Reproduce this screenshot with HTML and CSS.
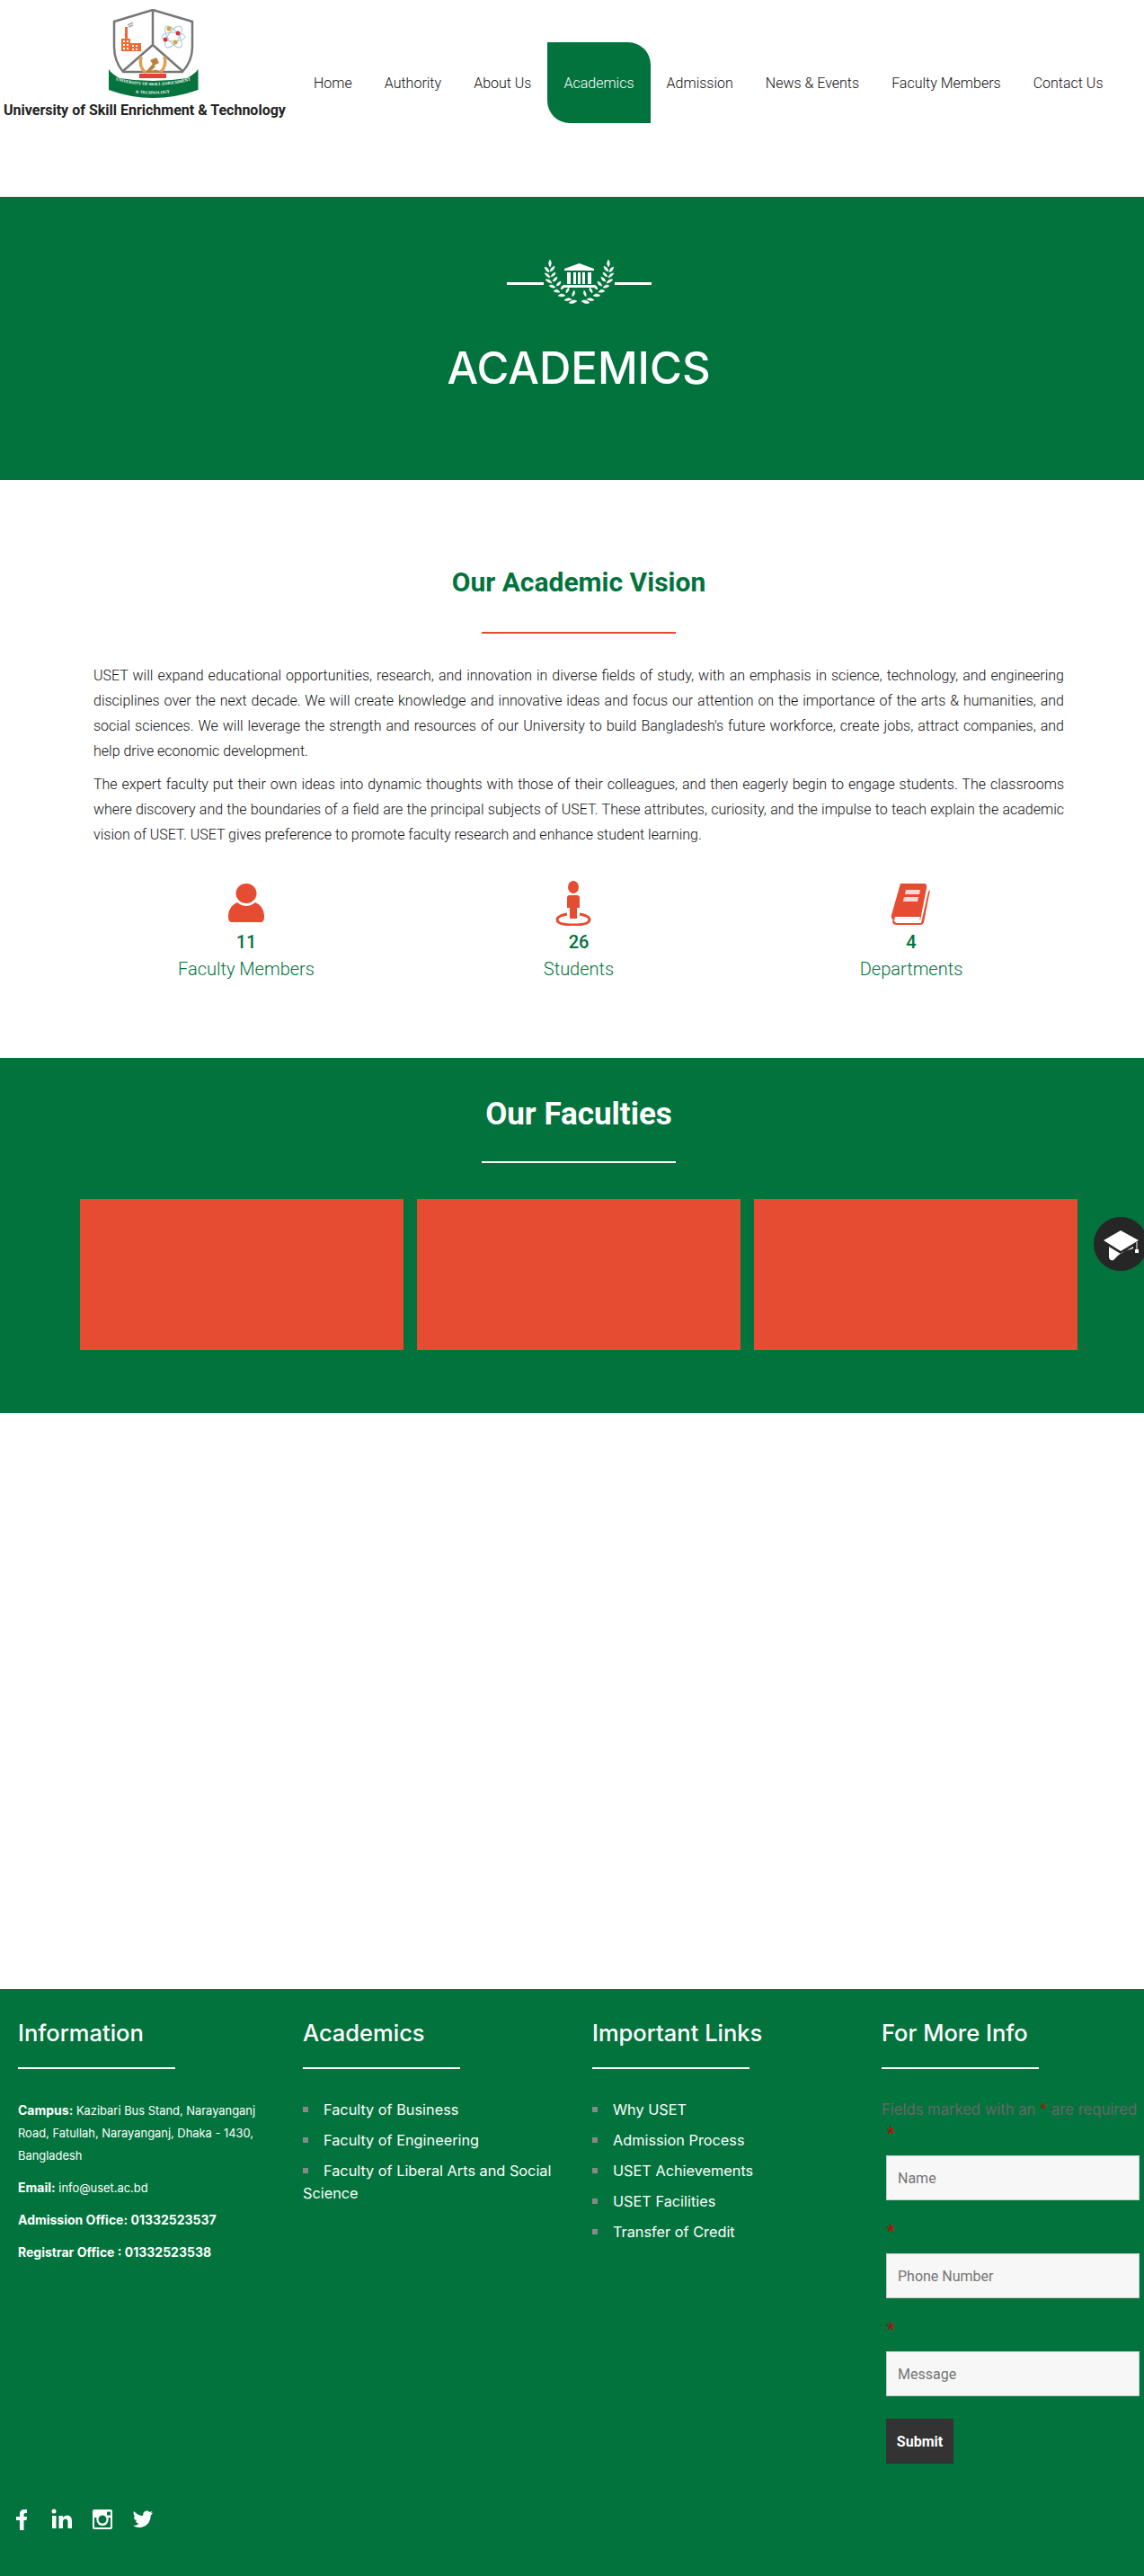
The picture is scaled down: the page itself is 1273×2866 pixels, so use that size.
FILE: index.html
```html
<!DOCTYPE html>
<html lang="en">
<head>
  <meta charset="UTF-8">
  <meta name="viewport" content="width=device-width, initial-scale=1.0">
  <title>Academics - University of Skill Enrichment &amp; Technology</title>
  <link rel="stylesheet" href="styles.css">
</head>
<body>
<div class="page">

  <!-- header -->
  <header class="site-header">
    <a class="brand" href="#">
      <svg class="brand-logo" viewBox="0 0 101 100" width="101" height="100">
        <path d="M50 1 L94 14 V42 Q94 58 83 70 H17 Q7 58 7 42 V14 Z" fill="#fff" stroke="#777" stroke-width="2.500"/>
        <path d="M50 1 V40 M50 40 L17 69 M50 40 L83 69" fill="none" stroke="#777" stroke-width="2.500"/>
        <!-- factory -->
        <path d="M15 47 V33 H19 V20 H22 V33 H25 V38 H37 V47 Z" fill="#ee6a33"/>
        <path d="M17 35h2v2h-2z M21 35h2v2h-2z M17 39h2v2h-2z M21 39h2v2h-2z M17 43h2v2h-2z M21 43h2v2h-2z M27 40h2v2h-2z M31 40h2v2h-2z M27 44h2v2h-2z M31 44h2v2h-2z" fill="#fff"/>
        <path d="M22 18 L28 15 M23 20 L28 18" stroke="#aaa" stroke-width="1.500"/>
        <!-- atom -->
        <g fill="none" stroke="#a9c9d8" stroke-width="1">
          <ellipse cx="73" cy="31" rx="6" ry="14" transform="rotate(-35 73 31)"/>
          <ellipse cx="73" cy="31" rx="6" ry="14" transform="rotate(35 73 31)"/>
          <ellipse cx="73" cy="31" rx="13" ry="5"/>
        </g>
        <circle cx="68" cy="22" r="2.500" fill="#d9a441"/>
        <circle cx="78" cy="27" r="2.500" fill="#d8343f"/>
        <circle cx="64" cy="34" r="2.500" fill="#d8343f"/>
        <circle cx="75" cy="37" r="2.500" fill="#d9a441"/>
        <!-- gavel and laurel -->
        <path d="M37 53 Q34 64 42 71 M63 53 Q66 64 58 71" fill="none" stroke="#e0a050" stroke-width="3.500"/>
        <path d="M42 70 L50 61 L53 64 L46 71 Z M47 57 L54 54 L57 60 L51 63 Z M46 71 Q53 64 60 71 Z" fill="#b9813f"/>
        <path d="M35 72 H65 V77 H35 Z" fill="#e4433a"/>
        <!-- banner -->
        <path d="M1 67 Q4 72 13 77 Q50 83 88 77 Q97 72 100.500 67 V90 Q50 108 1 90 Z" fill="#04733d"/>
        <path id="ribbonTop" d="M4 78 Q50 92 97 78" fill="none"/>
        <path id="ribbonLow" d="M24 92 Q50 97 76 92" fill="none"/>
        <text class="brand-ribbon"><textPath href="#ribbonTop" startOffset="50%" text-anchor="middle">UNIVERSITY OF SKILL ENRICHMENT</textPath></text>
        <text class="brand-ribbon"><textPath href="#ribbonLow" startOffset="50%" text-anchor="middle">&amp; TECHNOLOGY</textPath></text>
      </svg>
      <span class="brand-name">University of Skill Enrichment &amp; Technology</span>
    </a>
    <nav class="main-nav">
      <a href="#">Home</a>
      <a href="#">Authority</a>
      <a href="#">About Us</a>
      <a href="#" class="active">Academics</a>
      <a href="#">Admission</a>
      <a href="#">News &amp; Events</a>
      <a href="#">Faculty Members</a>
      <a href="#">Contact Us</a>
    </nav>
  </header>

  <!-- page banner -->
  <section class="hero">
    <svg class="hero-emblem" viewBox="0 0 161 52" width="161" height="52">
      <defs>
        <g id="laurel" fill="#fff" stroke="#fff" stroke-width="0.500">
          <path d="M48 1 Q51 5 48 9 Q45 5 48 1Z"/>
          <path d="M47 15 Q43 14 42 9 Q47 10 47 15Z"/>
          <path d="M48 14 Q48 10 53 8 Q53 13 48 14Z"/>
          <path d="M48 21 Q44 20 42 16 Q47 16 48 21Z"/>
          <path d="M49 20 Q50 16 54 15 Q54 19 49 20Z"/>
          <path d="M50 27 Q46 27 43 23 Q48 22 50 27Z"/>
          <path d="M51 25 Q52 21 56 20 Q56 25 51 25Z"/>
          <path d="M54 32 Q50 33 47 30 Q51 27 54 32Z"/>
          <path d="M55 30 Q56 26 60 25 Q60 30 55 30Z"/>
          <path d="M59 37 Q55 38 52 36 Q56 32 59 37Z"/>
          <path d="M60 34 Q60 30 64 29 Q65 33 60 34Z"/>
          <path d="M65 41 Q61 43 57 41 Q61 37 65 41Z"/>
          <path d="M66 38 Q65 34 69 32 Q70 36 66 38Z"/>
          <path d="M72 45 Q68 48 64 46 Q68 42 72 45Z"/>
          <path d="M73 42 Q72 38 75 35 Q77 39 73 42Z"/>
          <path d="M78 47 Q74 51 69 49 Q73 44 78 47Z"/>
        </g>
      </defs>
      <rect x="0" y="26" width="41" height="3" fill="#fff"/>
      <rect x="120" y="26" width="41" height="3" fill="#fff"/>
      <use href="#laurel"/>
      <use href="#laurel" transform="translate(161 0) scale(-1 1)"/>
      <path d="M80.500 5 L97 11 V13 H64 V11 Z" fill="#fff"/>
      <path d="M67 15h4v13h-4z M74 15h3v13h-3z M79 15h3v13h-3z M84 15h3v13h-3z M90 15h4v13h-4z" fill="#fff"/>
      <rect x="64" y="29" width="33" height="3" fill="#fff"/>
    </svg>
    <h1>ACADEMICS</h1>
  </section>

  <!-- vision -->
  <section class="vision">
    <h2 class="section-title">Our Academic Vision</h2>
    <div class="title-rule"></div>
    <p>USET will expand educational opportunities, research, and innovation in diverse fields of study, with an emphasis in science, technology, and engineering disciplines over the next decade. We will create knowledge and innovative ideas and focus our attention on the importance of the arts &amp; humanities, and social sciences. We will leverage the strength and resources of our University to build Bangladesh's future workforce, create jobs, attract companies, and help drive economic development.</p>
    <p>The expert faculty put their own ideas into dynamic thoughts with those of their colleagues, and then eagerly begin to engage students. The classrooms where discovery and the boundaries of a field are the principal subjects of USET. These attributes, curiosity, and the impulse to teach explain the academic vision of USET. USET gives preference to promote faculty research and enhance student learning.</p>

    <div class="stats">
      <div class="stat">
        <svg viewBox="0 0 40 50" width="40" height="50">
          <ellipse cx="20" cy="14" rx="11.500" ry="11" fill="#e64c32"/>
          <path d="M10 24 Q20 32 30 24 Q40 28 40 40 Q40 46 36 46 H4 Q0 46 0 40 Q0 28 10 24Z" fill="#e64c32"/>
        </svg>
        <div class="stat-num">11</div>
        <div class="stat-label">Faculty Members</div>
      </div>
      <div class="stat">
        <svg class="stat-student" viewBox="0 0 40 50" width="40" height="50">
          <ellipse cx="20" cy="7" rx="6" ry="7" fill="#e64c32"/>
          <path d="M13 19 Q13 16 16 16 H24 Q27 16 27 19 V30 H24 V42 H16 V30 H13Z" fill="#e64c32"/>
          <path d="M13 37 Q2 39 2 43 Q2 49 20 49 Q38 49 38 43 Q38 39 27 37" fill="none" stroke="#e64c32" stroke-width="3"/>
        </svg>
        <div class="stat-num">26</div>
        <div class="stat-label">Students</div>
      </div>
      <div class="stat">
        <svg viewBox="0 0 47 50" width="47" height="50">
          <path d="M11 3 H37 Q41 3 40 8 L33 44 H6 Q0 44 1 38 Z" fill="#e64c32"/>
          <path d="M5 40 H33 L32 46 H7 Q3 46 5 40Z" fill="#fff"/>
          <path d="M3 42 Q4 47 8 47 H34 L42 12 L44 10 L37 46 Q36 49 33 49 H7 Q0 49 3 42Z" fill="#e64c32"/>
          <path d="M17 10 H33 L32 15 H16Z M15 18 H31 L30 23 H14Z" fill="#fbd9d2"/>
        </svg>
        <div class="stat-num">4</div>
        <div class="stat-label">Departments</div>
      </div>
    </div>
  </section>

  <!-- faculties -->
  <section class="faculties">
    <h2 class="section-title">Our Faculties</h2>
    <div class="title-rule"></div>
    <div class="faculty-row">
      <div class="faculty-card"></div>
      <div class="faculty-card"></div>
      <div class="faculty-card"></div>
    </div>
    <a class="float-btn" href="#">
      <svg viewBox="0 0 60 60" width="60" height="60">
        <path d="M11 26 L30 15 L50 26 L30 38Z" fill="#fff"/>
        <path d="M17 33 L30 41 L44 33 V35 Q30 38 22 48 Q18 49 17 45Z" fill="#fff"/>
        <path d="M48 28 V36" stroke="#fff" stroke-width="1"/>
        <rect x="46" y="36" width="4" height="4" fill="#fff"/>
      </svg>
    </a>
  </section>

  <div class="blank-area"></div>

  <!-- footer -->
  <footer class="site-footer">
    <div class="footer-cols">
      <div class="footer-col first">
        <h3>Information</h3>
        <div class="foot-rule"></div>
        <p class="info"><b>Campus:</b> Kazibari Bus Stand, Narayanganj<br>Road, Fatullah, Narayanganj, Dhaka - 1430,<br>Bangladesh</p>
        <p class="info"><b>Email:</b> info@uset.ac.bd</p>
        <p class="info"><b>Admission Office: 01332523537</b></p>
        <p class="info"><b>Registrar Office : 01332523538</b></p>
      </div>
      <div class="footer-col">
        <h3>Academics</h3>
        <div class="foot-rule"></div>
        <ul class="foot-links">
          <li>Faculty of Business</li>
          <li>Faculty of Engineering</li>
          <li>Faculty of Liberal Arts and Social Science</li>
        </ul>
      </div>
      <div class="footer-col">
        <h3>Important Links</h3>
        <div class="foot-rule"></div>
        <ul class="foot-links">
          <li>Why USET</li>
          <li>Admission Process</li>
          <li>USET Achievements</li>
          <li>USET Facilities</li>
          <li>Transfer of Credit</li>
        </ul>
      </div>
      <div class="footer-col">
        <h3>For More Info</h3>
        <div class="foot-rule"></div>
        <div class="req-note">Fields marked with an <span>*</span> are required</div>
        <form class="contact-form">
          <label class="star" for="fName">*</label>
          <input type="text" id="fName" placeholder="Name">
          <label class="star" for="fPhone">*</label>
          <input type="text" id="fPhone" placeholder="Phone Number">
          <label class="star" for="fMsg">*</label>
          <input type="text" id="fMsg" placeholder="Message">
          <button type="button">Submit</button>
        </form>
      </div>
    </div>
    <div class="social">
      <a href="#"><svg viewBox="0 0 24 24" width="24" height="24"><path d="M10 24 V13 H6 V9 H10 V6 Q10 1 15 1 H18 V5 H16 Q14.500 5 14.500 7 V9 H18 L17.500 13 H14.500 V24Z" fill="#fff"/></svg></a>
      <a href="#"><svg viewBox="0 0 24 24" width="24" height="24"><circle cx="3" cy="3" r="2.500" fill="#fff"/><path d="M1 8h4.500v14H1z M8.500 8H13v2Q14.500 7.500 18 7.500 Q23 7.500 23 14 V22 H18.500 V15 Q18.500 11.500 16 11.500 Q13 11.500 13 15 V22 H8.500Z" fill="#fff"/></svg></a>
      <a href="#"><svg viewBox="0 0 24 24" width="24" height="24"><path fill-rule="evenodd" d="M3 1H21Q23 1 23 3V21Q23 23 21 23H3Q1 23 1 21V3Q1 1 3 1Z M3 10V20.500Q3 21 3.500 21H20.500Q21 21 21 20.500V10H18.500Q19.500 15 16 18Q12 20 8 18Q4.500 15 5.500 10Z M12 7.500A4.500 4.500 0 1 0 12 16.500A4.500 4.500 0 1 0 12 7.500Z M17 3.500V7.500H21V3.500Z" fill="#fff"/></svg></a>
      <a href="#"><svg viewBox="0 0 24 24" width="24" height="24"><path d="M23 4.500Q21.800 5 20.500 5.200Q22 4.300 22.500 2.800Q21 3.600 19.600 3.900Q18 2.300 15.900 2.500Q12 3 12 8Q7 8 2 3Q0.500 6.500 3.500 9.500Q2.500 9.400 1.800 9Q2 12.500 5.500 13.500Q4.500 13.800 3.700 13.600Q4.500 16.500 7.800 16.800Q4.500 19.200 1 19Q6 22 11.500 20.500Q20.500 18 20.800 7.600Q22.200 6.500 23 4.500Z" fill="#fff"/></svg></a>
    </div>
  </footer>

</div>
</body>
</html>
```
FILE: styles.css
```css
/* base */
html, body {
  margin: 0;
  padding: 0;
  overflow-x: hidden;
}
body {
  font-family: "Roboto", "Liberation Sans", sans-serif;
  background-color: #fff;
  color: #111;
}
/* the page is a little wider than the window, so the right side is cut */
.page {
  width: 1288px;
  position: relative;
}
a {
  text-decoration: none;
  color: inherit;
}

/* header */
.site-header {
  display: flex;
  height: 219px;
  background-color: #fff;
}
.brand {
  width: 331px;
  flex: none;
  display: flex;
  flex-direction: column;
  padding: 10px 0 0 4px;
  box-sizing: border-box;
}
.brand-logo {
  margin-left: 116px;
  display: block;
}
.brand-ribbon {
  font-family: "Liberation Serif", serif;
  font-size: 4.6px;
  font-weight: bold;
  fill: #fff;
}
.brand-name {
  font-size: 16px;
  font-weight: 700;
  line-height: 24px;
  margin-top: 1px;
  color: #222;
  white-space: nowrap;
}
.main-nav {
  display: flex;
  align-items: stretch;
  height: 90px;
  margin-top: 47px;
}
.main-nav a {
  display: flex;
  align-items: center;
  padding: 0 18px;
  font-size: 16px;
  font-weight: 300;
  color: #111;
  white-space: nowrap;
}
.main-nav a.active {
  background-color: #03733d;
  color: #fff;
  border-radius: 0 25px 0 25px;
}

/* banner */
.hero {
  height: 315px;
  box-sizing: border-box;
  padding-top: 69px;
  background-color: #03733d;
  text-align: center;
  color: #fff;
}
.hero-emblem {
  display: block;
  margin: 0 auto;
}
.hero h1 {
  margin: 40px 0 0;
  font-family: "Inter", sans-serif;
  font-size: 49px;
  font-weight: 500;
  line-height: 60px;
}

/* section titles */
.section-title {
  margin: 0;
  font-size: 30px;
  font-weight: 700;
  line-height: 40px;
  text-align: center;
}
.title-rule {
  width: 216px;
  height: 2px;
  margin: 35px auto 0;
  background-color: #e64c32;
}

/* vision */
.vision {
  padding: 94px 104px 84px;
}
.vision .section-title {
  color: #03733d;
}
.vision p {
  margin: 0 0 9px;
  font-size: 16px;
  font-weight: 300;
  line-height: 28px;
  text-align: justify;
  color: #111;
}
.vision .title-rule + p {
  margin-top: 33px;
}
.stats {
  display: grid;
  grid-template-columns: repeat(3, 370px);
  margin: 37px -15px 0;
}
.stat {
  text-align: center;
}
.stat svg {
  display: block;
  margin: 0 auto;
}
.stat .stat-student {
  position: relative;
  left: -6px;
}
.stat-num {
  margin-top: 3px;
  font-size: 20px;
  font-weight: 500;
  line-height: 30px;
  color: #03733d;
}
.stat-label {
  font-size: 20px;
  font-weight: 300;
  line-height: 30px;
  color: #03733d;
}

/* faculties */
.faculties {
  position: relative;
  padding: 43px 89px 70px;
  background-color: #03733d;
  color: #fff;
}
.faculties .section-title {
  font-size: 35px;
}
.faculties .title-rule {
  margin-top: 32px;
  background-color: #fff;
}
.faculty-row {
  display: flex;
  gap: 15px;
  margin-top: 40px;
}
.faculty-card {
  width: 360px;
  height: 168px;
  background-color: #e64c32;
}
.float-btn {
  position: absolute;
  left: 1217px;
  top: 177px;
  width: 60px;
  height: 60px;
  border-radius: 50%;
  background-color: #262626;
}
.float-btn svg {
  display: block;
}
.blank-area {
  height: 641px;
}

/* footer */
.site-footer {
  background-color: #03733d;
  color: #fff;
  font-family: "Inter", sans-serif;
  padding: 29px 0 54px;
}
.footer-cols {
  display: grid;
  grid-template-columns: repeat(4, 322px);
}
.footer-col {
  padding: 0 15px;
}
.footer-col.first {
  padding-left: 20px;
}
.footer-col h3 {
  margin: 0;
  font-size: 25.5px;
  font-weight: 500;
  line-height: 40px;
  white-space: nowrap;
}
.foot-rule {
  width: 175px;
  height: 2px;
  margin: 18px 0 33px;
  background-color: #fff;
}
.info {
  margin: 0 0 10px;
  font-size: 12.9px;
  line-height: 25px;
  white-space: nowrap;
}
.info b {
  font-size: 14px;
  font-weight: 700;
}
.foot-links {
  list-style: none;
  margin: 0;
  padding: 0;
}
.foot-links li {
  margin-bottom: 9px;
  font-size: 16.3px;
  line-height: 25px;
}
.foot-links li::before {
  content: "";
  display: inline-block;
  width: 6px;
  height: 6px;
  margin: 0 17px 3px 0;
  background-color: #888;
}
.req-note {
  font-size: 16.6px;
  line-height: 25px;
  color: #666;
  white-space: nowrap;
}
.req-note span {
  color: #c00;
}
.contact-form {
  padding-left: 5px;
}
.star {
  display: block;
  height: 38px;
  line-height: 25px;
  padding-left: 1px;
  font-family: "Roboto", sans-serif;
  font-size: 18px;
  font-weight: 700;
  color: #c00;
}
.contact-form input {
  display: block;
  width: 282px;
  height: 50px;
  box-sizing: border-box;
  margin-bottom: 21px;
  padding: 0 12px;
  border: 1px solid #ccc;
  background-color: #f7f7f7;
  font-family: "Roboto", sans-serif;
  font-size: 16px;
}
.contact-form input::placeholder {
  color: #757575;
}
.contact-form button {
  display: block;
  width: 75px;
  height: 50px;
  margin-top: 25px;
  padding: 0;
  border: none;
  background-color: #333;
  color: #fff;
  font-family: "Roboto", sans-serif;
  font-size: 16px;
  font-weight: 700;
}
.social {
  display: flex;
  gap: 21px;
  margin: 50px 0 0 12px;
}
.social a {
  display: block;
  height: 24px;
}
.social svg {
  display: block;
}
```
